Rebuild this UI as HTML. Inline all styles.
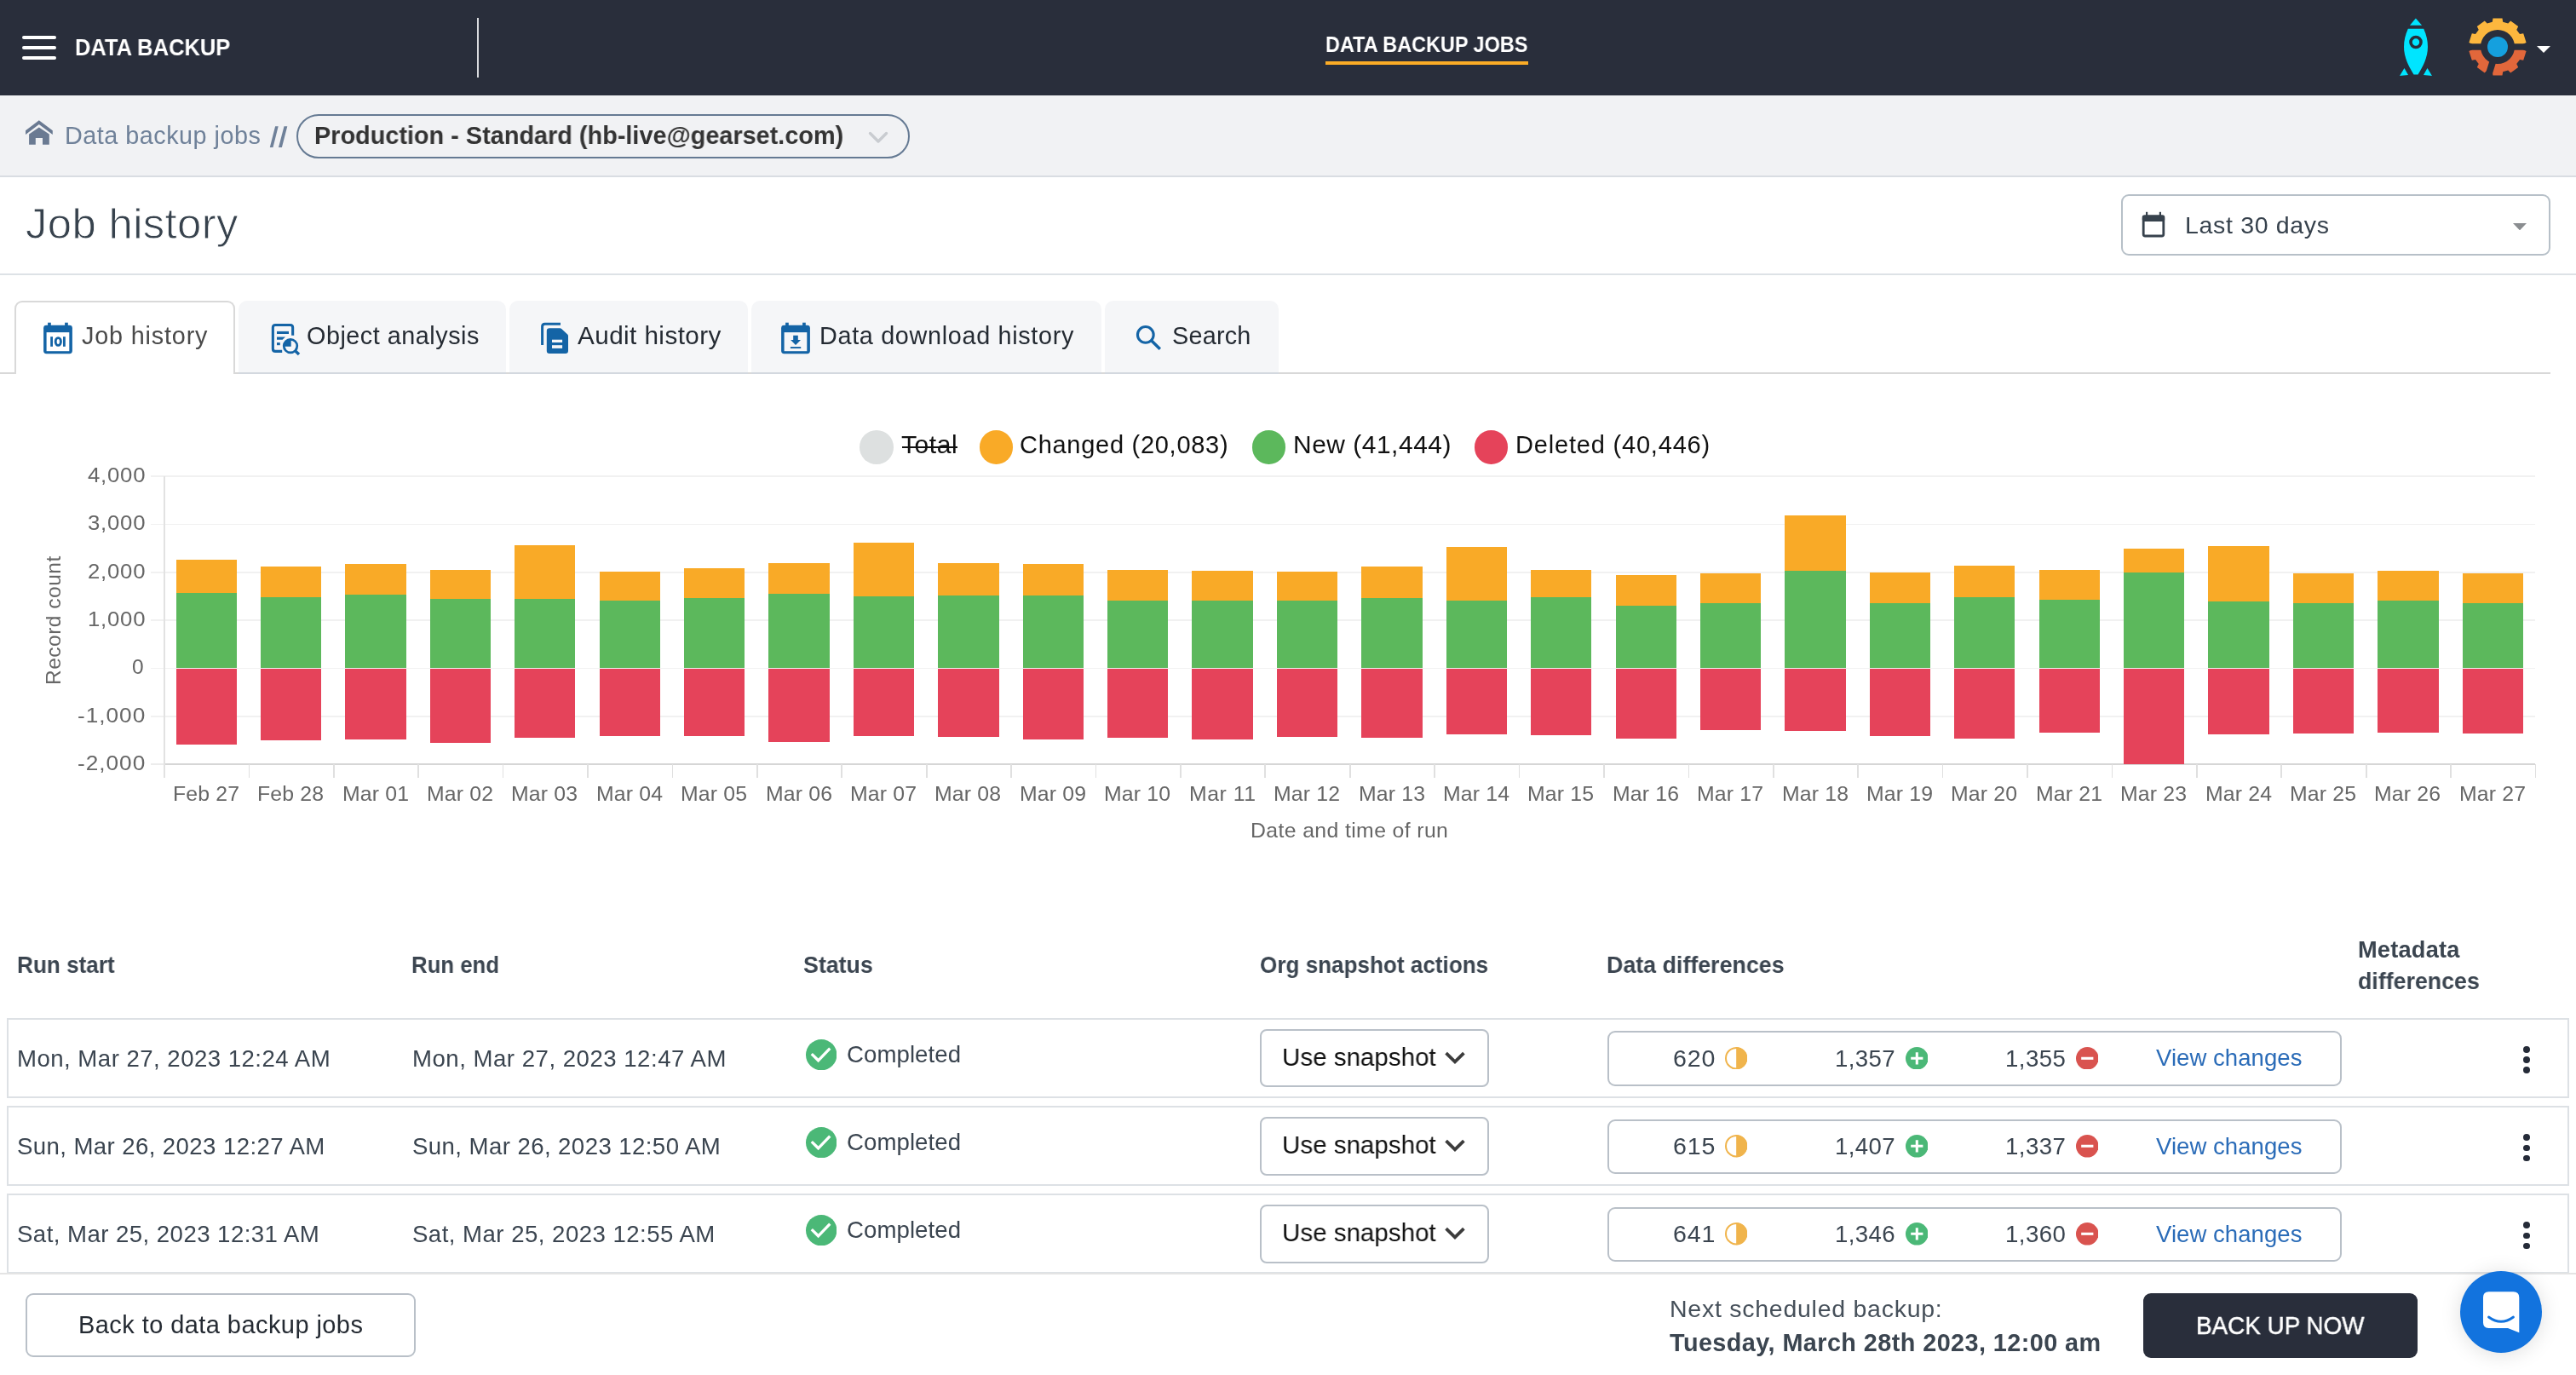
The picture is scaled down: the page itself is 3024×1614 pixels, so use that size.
<!DOCTYPE html>
<html lang="en"><head><meta charset="utf-8"><title>Job history - Data backup</title>
<style>
html,body{margin:0;padding:0;background:#fff;}
body{width:3024px;height:1614px;position:relative;overflow:hidden;font-family:"Liberation Sans",sans-serif;}
@media (max-width:1600px){html{zoom:.5;}}
.b{position:absolute;display:block;}
.t{position:absolute;white-space:pre;transform-origin:0 50%;will-change:transform;font-family:"Liberation Sans",sans-serif;}
</style></head><body>
<div class="b" style="left:0.0px;top:0.0px;width:3024.0px;height:112.0px;background:#292e3b;"></div>
<div class="b" style="left:26.2px;top:42.2px;width:39.8px;height:4.2px;background:#fff;border-radius:2.1px;"></div>
<div class="b" style="left:26.2px;top:54.0px;width:39.8px;height:4.2px;background:#fff;border-radius:2.1px;"></div>
<div class="b" style="left:26.2px;top:65.7px;width:39.8px;height:4.2px;background:#fff;border-radius:2.1px;"></div>
<span class="t" style="left:87.5px;top:41.8px;font-size:27.4px;line-height:27.4px;color:#fff;font-weight:700;transform:scaleX(0.9310);">DATA BACKUP</span>
<div class="b" style="left:560.0px;top:21.0px;width:2.0px;height:69.5px;background:#d9dbde;"></div>
<span class="t" style="left:1556.2px;top:40.0px;font-size:25.8px;line-height:25.8px;color:#fff;font-weight:700;transform:scaleX(0.9083);">DATA BACKUP JOBS</span>
<div class="b" style="left:1555.9px;top:72.0px;width:238.1px;height:3.9px;background:#fbac26;"></div>
<svg class="b" style="left:2812.0px;top:16.0px;" width="48.0" height="78.0" viewBox="0 0 48 78">
<path d="M23.9 5.4 L31.1 13.8 L16.9 13.8 Z" fill="#00e5ff"/>
<path d="M14.8 17.7 L33.2 17.7 C36.5 25 38 32 38 39 C38 51 32.5 62 26.5 71.5 L21.5 71.5 C15.5 62 10 51 10 39 C10 32 11.5 25 14.8 17.7 Z" fill="#00e5ff"/>
<circle cx="24" cy="33.5" r="6" fill="none" stroke="#292e3b" stroke-width="3.6"/>
<path d="M10.5 64 L15 72 L5 73 Z" fill="#00e5ff"/>
<path d="M37.5 64 L43 73 L33 72 Z" fill="#00e5ff"/>
</svg>
<svg class="b" style="left:2898.0px;top:21.0px;" width="68.0" height="68.0" viewBox="0 0 68 68">
<defs><clipPath id="gt"><rect x="0" y="0" width="68" height="30.3"/></clipPath>
<clipPath id="gb"><rect x="0" y="37.7" width="68" height="31"/></clipPath></defs>
<path d="M27.82 4.64 L28.47 0.45 L39.53 0.45 L40.18 4.64 L46.26 6.62 L49.25 3.61 L58.19 10.11 L56.25 13.88 L60.01 19.05 L64.20 18.37 L67.61 28.89 L63.83 30.80 L63.83 37.20 L67.61 39.11 L64.20 49.63 L60.01 48.95 L56.25 54.12 L58.19 57.89 L49.25 64.39 L46.26 61.38 L40.18 63.36 L39.53 67.55 L28.47 67.55 L27.82 63.36 L21.74 61.38 L18.75 64.39 L9.81 57.89 L11.75 54.12 L7.99 48.95 L3.80 49.63 L0.39 39.11 L4.17 37.20 L4.17 30.80 L0.39 28.89 L3.80 18.37 L7.99 19.05 L11.75 13.88 L9.81 10.11 L18.75 3.61 L21.74 6.62 Z M54.00 34.00 A20 20 0 1 0 14.00 34.00 A20 20 0 1 0 54.00 34.00 Z" fill="#fdb73e" fill-rule="evenodd" clip-path="url(#gt)"/>
<path d="M27.82 4.64 L28.47 0.45 L39.53 0.45 L40.18 4.64 L46.26 6.62 L49.25 3.61 L58.19 10.11 L56.25 13.88 L60.01 19.05 L64.20 18.37 L67.61 28.89 L63.83 30.80 L63.83 37.20 L67.61 39.11 L64.20 49.63 L60.01 48.95 L56.25 54.12 L58.19 57.89 L49.25 64.39 L46.26 61.38 L40.18 63.36 L39.53 67.55 L28.47 67.55 L27.82 63.36 L21.74 61.38 L18.75 64.39 L9.81 57.89 L11.75 54.12 L7.99 48.95 L3.80 49.63 L0.39 39.11 L4.17 37.20 L4.17 30.80 L0.39 28.89 L3.80 18.37 L7.99 19.05 L11.75 13.88 L9.81 10.11 L18.75 3.61 L21.74 6.62 Z M54.00 34.00 A20 20 0 1 0 14.00 34.00 A20 20 0 1 0 54.00 34.00 Z" fill="#e2673b" fill-rule="evenodd" clip-path="url(#gb)"/>
<path d="M33.7 34 L22.2 71" stroke="#292e3b" stroke-width="7.8" fill="none"/>
<circle cx="34" cy="34" r="12" fill="#15a0de"/>
</svg>
<svg class="b" style="left:2978.0px;top:54.0px;" width="16.0" height="8.0" viewBox="0 0 16 8"><path d="M0 0 L16 0 L8 8 Z" fill="#fff"/></svg>
<div class="b" style="left:0.0px;top:112.0px;width:3024.0px;height:96.0px;background:#f1f2f4;border-bottom:2px solid #d9dde2;box-sizing:border-box;"></div>
<svg class="b" style="left:29.0px;top:140.0px;" width="34.0" height="31.0" viewBox="0 0 34 31">
<path d="M16.8 1.2 L32.8 13.2 L32.8 18 L16.8 6 L1 18 L1 13.2 Z" fill="#6a7a92"/>
<path d="M16.8 9.4 L28.8 17.6 L28.8 29.8 L21 29.8 L21 22 L12.8 22 L12.8 29.8 L5.1 29.8 L5.1 17.6 Z" fill="#6a7a92"/>
</svg>
<span class="t" style="left:76.0px;top:145.2px;font-size:28.8px;line-height:28.8px;color:#6f8199;letter-spacing:0.49px;">Data backup jobs</span>
<svg class="b" style="left:316.0px;top:148.0px;" width="22.0" height="26.0" viewBox="0 0 22 26"><path d="M0.8 25.1 L4.5 25.1 L10.7 0.3 L7.1 0.3 Z M11 25.1 L14.9 25.1 L21.3 0.3 L17.5 0.3 Z" fill="#6f8199"/></svg>
<div class="b" style="left:348.1px;top:134.0px;width:719.9px;height:51.8px;border:2px solid #657a93;border-radius:26px;box-sizing:border-box;background:#f1f2f4;"></div>
<span class="t" style="left:369.0px;top:145.1px;font-size:29px;line-height:29px;color:#333;font-weight:700;transform:scaleX(0.9948);">Production - Standard (hb-live@gearset.com)</span>
<svg class="b" style="left:1019.0px;top:154.0px;" width="24.0" height="15.0" viewBox="0 0 24 15"><path d="M2.5 2.5 L12 12 L21.5 2.5" stroke="#c9ccd0" stroke-width="3.4" fill="none" stroke-linecap="round" stroke-linejoin="round"/></svg>
<div class="b" style="left:0.0px;top:208.0px;width:3024.0px;height:115.0px;background:#fff;border-bottom:2px solid #dde2e6;box-sizing:border-box;"></div>
<span class="t" style="left:30.2px;top:238.0px;font-size:50.8px;line-height:50.8px;color:#37424d;letter-spacing:0.38px;-webkit-text-stroke:0.9px #fff;">Job history</span>
<div class="b" style="left:2490.1px;top:228.3px;width:503.7px;height:71.3px;border:2px solid #b7c0c8;border-radius:9px;box-sizing:border-box;background:#fff;"></div>
<svg class="b" style="left:2514.0px;top:248.0px;" width="28.0" height="31.0" viewBox="0 0 28 31">
<rect x="2.2" y="6" width="23.6" height="23" rx="2" fill="none" stroke="#37424d" stroke-width="2.8"/>
<rect x="0.8" y="4.6" width="26.4" height="7.4" rx="2" fill="#37424d"/>
<rect x="5" y="0.8" width="2.2" height="5" fill="#37424d"/><rect x="20.8" y="0.8" width="2.2" height="5" fill="#37424d"/>
</svg>
<span class="t" style="left:2564.5px;top:249.6px;font-size:28.5px;line-height:28.5px;color:#37424d;letter-spacing:0.67px;">Last 30 days</span>
<svg class="b" style="left:2950.0px;top:262.0px;" width="16.0" height="8.4" viewBox="0 0 16 8.4"><path d="M0 0 L16 0 L8 8.4 Z" fill="#8a8d90"/></svg>
<div class="b" style="left:0.0px;top:436.8px;width:2994.0px;height:2.0px;background:#d8d8d8;"></div>
<div class="b" style="left:279.7px;top:353.0px;width:314.0px;height:83.8px;background:#f5f6f8;border-radius:10px 10px 0 0;"></div>
<div class="b" style="left:279.7px;top:436.8px;width:314.0px;height:2.0px;background:#d3d8df;"></div>
<div class="b" style="left:597.8px;top:353.0px;width:280.2px;height:83.8px;background:#f5f6f8;border-radius:10px 10px 0 0;"></div>
<div class="b" style="left:597.8px;top:436.8px;width:280.2px;height:2.0px;background:#d3d8df;"></div>
<div class="b" style="left:881.9px;top:353.0px;width:411.0px;height:83.8px;background:#f5f6f8;border-radius:10px 10px 0 0;"></div>
<div class="b" style="left:881.9px;top:436.8px;width:411.0px;height:2.0px;background:#d3d8df;"></div>
<div class="b" style="left:1297.0px;top:353.0px;width:204.2px;height:83.8px;background:#f5f6f8;border-radius:10px 10px 0 0;"></div>
<div class="b" style="left:1297.0px;top:436.8px;width:204.2px;height:2.0px;background:#d3d8df;"></div>
<div class="b" style="left:16.8px;top:353.0px;width:258.8px;height:85.8px;background:#fff;border:2px solid #d9d9d9;border-bottom:none;border-radius:9px 9px 0 0;box-sizing:border-box;"></div>
<svg class="b" style="left:51.0px;top:378.0px;" width="34.0" height="38.0" viewBox="0 0 34 38">
<rect x="0.1" y="3.8" width="33.8" height="33.4" rx="3.4" fill="#1464a6"/>
<rect x="5.1" y="0.7" width="3.7" height="5" fill="#1464a6"/><rect x="25.1" y="0.7" width="3.7" height="5" fill="#1464a6"/>
<rect x="3.6" y="12.1" width="26.7" height="22.1" fill="#fff"/>
<rect x="8.2" y="17.2" width="2.8" height="11.6" fill="#1464a6"/><rect x="23" y="17.2" width="2.8" height="11.6" fill="#1464a6"/>
<ellipse cx="17.3" cy="23" rx="3.1" ry="4.4" fill="none" stroke="#1464a6" stroke-width="2.9"/></svg>
<span class="t" style="left:96.0px;top:380.2px;font-size:28.8px;line-height:28.8px;color:#4a4a4a;letter-spacing:0.82px;">Job history</span>
<svg class="b" style="left:318.0px;top:379.0px;" width="36.0" height="39.0" viewBox="0 0 36 39">
<path d="M25.65 14.8 L25.65 5.5 Q25.65 2.55 22.7 2.55 L5.3 2.55 Q2.35 2.55 2.35 5.5 L2.35 30.4 Q2.35 33.35 5.3 33.35 L13.2 33.35" fill="none" stroke="#1464a6" stroke-width="3.1"/>
<rect x="7" y="9.9" width="14" height="3.1" fill="#1464a6"/>
<path d="M7 16.5 L17 16.5 L13.6 19.8 L7 19.8 Z" fill="#1464a6"/>
<rect x="7" y="23.1" width="3.8" height="3.1" fill="#1464a6"/>
<circle cx="23" cy="27.1" r="10.7" fill="#f5f6f8"/>
<circle cx="23" cy="27.1" r="7.8" fill="none" stroke="#1464a6" stroke-width="2.7"/>
<path d="M23.7 27.8 L15.2 27.8 A7.8 7.8 0 0 1 23.7 19.3 Z" fill="#1464a6"/>
<path d="M28.2 32.4 L33 37" stroke="#1464a6" stroke-width="3.4"/>
</svg>
<span class="t" style="left:359.6px;top:380.2px;font-size:28.8px;line-height:28.8px;color:#252b33;letter-spacing:0.51px;">Object analysis</span>
<svg class="b" style="left:634.0px;top:378.0px;" width="34.0" height="38.0" viewBox="0 0 34 38">
<path d="M24 2.3 L5.6 2.3 Q2.6 2.3 2.6 5.3 L2.6 27.1" fill="none" stroke="#1464a6" stroke-width="3"/>
<path d="M11 7.2 L23.4 7.2 Q24.4 7.2 25.2 8 L32.2 14.6 Q33 15.4 33 16.4 L33 33.8 Q33 37 29.8 37 L11 37 Q7.8 37 7.8 33.8 L7.8 10.4 Q7.8 7.2 11 7.2 Z" fill="#1464a6"/>
<rect x="14" y="20.7" width="12.1" height="3.3" fill="#f5f6f8"/><rect x="14" y="27.2" width="12.1" height="3.7" fill="#f5f6f8"/>
</svg>
<span class="t" style="left:677.6px;top:380.2px;font-size:28.8px;line-height:28.8px;color:#252b33;letter-spacing:0.40px;transform:scaleX(1.0315);">Audit history</span>
<svg class="b" style="left:917.0px;top:378.0px;" width="34.0" height="38.0" viewBox="0 0 34 38">
<rect x="0.1" y="3.8" width="33.8" height="33.4" rx="3.4" fill="#1464a6"/>
<rect x="5.1" y="0.7" width="3.7" height="5" fill="#1464a6"/><rect x="25.1" y="0.7" width="3.7" height="5" fill="#1464a6"/>
<rect x="3.6" y="12.1" width="26.7" height="22.1" fill="#f5f6f8"/>
<path d="M14.2 15.8 L19.8 15.8 L19.8 21 L23 21 L17 27 L11.1 21 L14.2 21 Z" fill="#1464a6"/>
<rect x="10.9" y="29.1" width="12.3" height="1.9" fill="#1464a6"/></svg>
<span class="t" style="left:962.0px;top:380.2px;font-size:28.8px;line-height:28.8px;color:#252b33;letter-spacing:0.67px;">Data download history</span>
<svg class="b" style="left:1333.0px;top:381.0px;" width="32.0" height="32.0" viewBox="0 0 32 32">
<circle cx="11.8" cy="11.9" r="9.35" fill="none" stroke="#1464a6" stroke-width="3.1"/>
<path d="M18.6 18.7 L28.8 28.7" stroke="#1464a6" stroke-width="3.5"/>
</svg>
<span class="t" style="left:1376.3px;top:380.2px;font-size:28.8px;line-height:28.8px;color:#252b33;letter-spacing:0.22px;">Search</span>
<div class="b" style="left:1009.4px;top:505.0px;width:39.6px;height:39.6px;background:#dde0e0;border-radius:50%;"></div>
<div class="b" style="left:1149.5px;top:505.0px;width:39.6px;height:39.6px;background:#f9aa27;border-radius:50%;"></div>
<div class="b" style="left:1469.7px;top:505.0px;width:39.6px;height:39.6px;background:#5cb85c;border-radius:50%;"></div>
<div class="b" style="left:1730.6px;top:505.0px;width:39.6px;height:39.6px;background:#e5435a;border-radius:50%;"></div>
<span class="t" style="left:1058.2px;top:507.8px;font-size:29px;line-height:29px;color:#111;letter-spacing:0.52px;transform:scaleX(1.0350);">Total</span>
<div class="b" style="left:1058.5px;top:523.5px;width:65.5px;height:2.8px;background:#111;"></div>
<span class="t" style="left:1197.4px;top:507.8px;font-size:29px;line-height:29px;color:#111;letter-spacing:0.72px;">Changed (20,083)</span>
<span class="t" style="left:1517.5px;top:507.8px;font-size:29px;line-height:29px;color:#111;letter-spacing:0.50px;transform:scaleX(1.0326);">New (41,444)</span>
<span class="t" style="left:1778.8px;top:507.8px;font-size:29px;line-height:29px;color:#111;letter-spacing:0.81px;">Deleted (40,446)</span>
<div class="b" style="left:176.5px;top:558.1px;width:2799.5px;height:1.8px;background:#f1f1f1;"></div>
<div class="b" style="left:176.5px;top:614.5px;width:2799.5px;height:1.8px;background:#f1f1f1;"></div>
<div class="b" style="left:176.5px;top:670.9px;width:2799.5px;height:1.8px;background:#f1f1f1;"></div>
<div class="b" style="left:176.5px;top:727.2px;width:2799.5px;height:1.8px;background:#f1f1f1;"></div>
<div class="b" style="left:176.5px;top:783.6px;width:2799.5px;height:1.8px;background:#f1f1f1;"></div>
<div class="b" style="left:176.5px;top:840.0px;width:2799.5px;height:1.8px;background:#f1f1f1;"></div>
<div class="b" style="left:176.5px;top:896.4px;width:16.5px;height:1.8px;background:#ececec;"></div>
<div class="b" style="left:193.0px;top:896.4px;width:2783.0px;height:1.8px;background:#d6d6d6;"></div>
<div class="b" style="left:192.1px;top:559.0px;width:1.8px;height:354.0px;background:#e2e2e2;"></div>
<div class="b" style="left:291.5px;top:897.0px;width:1.8px;height:16.0px;background:#e0e0e0;"></div>
<div class="b" style="left:390.9px;top:897.0px;width:1.8px;height:16.0px;background:#e0e0e0;"></div>
<div class="b" style="left:490.3px;top:897.0px;width:1.8px;height:16.0px;background:#e0e0e0;"></div>
<div class="b" style="left:589.7px;top:897.0px;width:1.8px;height:16.0px;background:#e0e0e0;"></div>
<div class="b" style="left:689.1px;top:897.0px;width:1.8px;height:16.0px;background:#e0e0e0;"></div>
<div class="b" style="left:788.6px;top:897.0px;width:1.8px;height:16.0px;background:#e0e0e0;"></div>
<div class="b" style="left:888.0px;top:897.0px;width:1.8px;height:16.0px;background:#e0e0e0;"></div>
<div class="b" style="left:987.4px;top:897.0px;width:1.8px;height:16.0px;background:#e0e0e0;"></div>
<div class="b" style="left:1086.8px;top:897.0px;width:1.8px;height:16.0px;background:#e0e0e0;"></div>
<div class="b" style="left:1186.2px;top:897.0px;width:1.8px;height:16.0px;background:#e0e0e0;"></div>
<div class="b" style="left:1285.6px;top:897.0px;width:1.8px;height:16.0px;background:#e0e0e0;"></div>
<div class="b" style="left:1385.0px;top:897.0px;width:1.8px;height:16.0px;background:#e0e0e0;"></div>
<div class="b" style="left:1484.4px;top:897.0px;width:1.8px;height:16.0px;background:#e0e0e0;"></div>
<div class="b" style="left:1583.8px;top:897.0px;width:1.8px;height:16.0px;background:#e0e0e0;"></div>
<div class="b" style="left:1683.2px;top:897.0px;width:1.8px;height:16.0px;background:#e0e0e0;"></div>
<div class="b" style="left:1782.7px;top:897.0px;width:1.8px;height:16.0px;background:#e0e0e0;"></div>
<div class="b" style="left:1882.1px;top:897.0px;width:1.8px;height:16.0px;background:#e0e0e0;"></div>
<div class="b" style="left:1981.5px;top:897.0px;width:1.8px;height:16.0px;background:#e0e0e0;"></div>
<div class="b" style="left:2080.9px;top:897.0px;width:1.8px;height:16.0px;background:#e0e0e0;"></div>
<div class="b" style="left:2180.3px;top:897.0px;width:1.8px;height:16.0px;background:#e0e0e0;"></div>
<div class="b" style="left:2279.7px;top:897.0px;width:1.8px;height:16.0px;background:#e0e0e0;"></div>
<div class="b" style="left:2379.1px;top:897.0px;width:1.8px;height:16.0px;background:#e0e0e0;"></div>
<div class="b" style="left:2478.5px;top:897.0px;width:1.8px;height:16.0px;background:#e0e0e0;"></div>
<div class="b" style="left:2577.9px;top:897.0px;width:1.8px;height:16.0px;background:#e0e0e0;"></div>
<div class="b" style="left:2677.3px;top:897.0px;width:1.8px;height:16.0px;background:#e0e0e0;"></div>
<div class="b" style="left:2776.8px;top:897.0px;width:1.8px;height:16.0px;background:#e0e0e0;"></div>
<div class="b" style="left:2876.2px;top:897.0px;width:1.8px;height:16.0px;background:#e0e0e0;"></div>
<div class="b" style="left:2975.6px;top:897.0px;width:1.8px;height:16.0px;background:#e0e0e0;"></div>
<span class="t" style="left:102.9px;top:545.8px;font-size:24.5px;line-height:24.5px;color:#666;letter-spacing:0.74px;transform:scaleX(1.0507);">4,000</span>
<span class="t" style="left:102.9px;top:602.1px;font-size:24.5px;line-height:24.5px;color:#666;letter-spacing:0.74px;transform:scaleX(1.0507);">3,000</span>
<span class="t" style="left:102.9px;top:658.5px;font-size:24.5px;line-height:24.5px;color:#666;letter-spacing:0.74px;transform:scaleX(1.0507);">2,000</span>
<span class="t" style="left:102.9px;top:714.9px;font-size:24.5px;line-height:24.5px;color:#666;letter-spacing:0.74px;transform:scaleX(1.0507);">1,000</span>
<span class="t" style="left:155.2px;top:771.3px;font-size:24.5px;line-height:24.5px;color:#666;">0</span>
<span class="t" style="left:91.2px;top:827.7px;font-size:24.5px;line-height:24.5px;color:#666;letter-spacing:0.91px;transform:scaleX(1.0702);">-1,000</span>
<span class="t" style="left:91.2px;top:884.0px;font-size:24.5px;line-height:24.5px;color:#666;letter-spacing:0.91px;transform:scaleX(1.0702);">-2,000</span>
<div class="b" style="left:61.5px;top:728px;width:0;height:0;transform:rotate(-90deg);"><span class="t" style="left:-75.9px;top:-11.5px;font-size:24.5px;line-height:24.5px;color:#666;letter-spacing:0.50px;">Record count</span></div>
<div class="b" style="left:206.5px;top:657.0px;width:71.4px;height:39.0px;background:#f9aa27;"></div>
<div class="b" style="left:206.5px;top:696.0px;width:71.4px;height:87.7px;background:#5cb85c;"></div>
<div class="b" style="left:206.5px;top:785.3px;width:71.4px;height:88.7px;background:#e5435a;"></div>
<span class="t" style="left:202.7px;top:920.0px;font-size:24.8px;line-height:24.8px;color:#666;letter-spacing:0.17px;">Feb 27</span>
<div class="b" style="left:305.9px;top:665.0px;width:71.4px;height:36.0px;background:#f9aa27;"></div>
<div class="b" style="left:305.9px;top:701.0px;width:71.4px;height:82.7px;background:#5cb85c;"></div>
<div class="b" style="left:305.9px;top:785.3px;width:71.4px;height:83.7px;background:#e5435a;"></div>
<span class="t" style="left:302.1px;top:920.0px;font-size:24.8px;line-height:24.8px;color:#666;letter-spacing:0.17px;">Feb 28</span>
<div class="b" style="left:405.3px;top:662.0px;width:71.4px;height:36.0px;background:#f9aa27;"></div>
<div class="b" style="left:405.3px;top:698.0px;width:71.4px;height:85.7px;background:#5cb85c;"></div>
<div class="b" style="left:405.3px;top:785.3px;width:71.4px;height:82.7px;background:#e5435a;"></div>
<span class="t" style="left:401.6px;top:920.0px;font-size:24.8px;line-height:24.8px;color:#666;letter-spacing:0.17px;">Mar 01</span>
<div class="b" style="left:504.7px;top:669.0px;width:71.4px;height:34.0px;background:#f9aa27;"></div>
<div class="b" style="left:504.7px;top:703.0px;width:71.4px;height:80.7px;background:#5cb85c;"></div>
<div class="b" style="left:504.7px;top:785.3px;width:71.4px;height:86.7px;background:#e5435a;"></div>
<span class="t" style="left:501.0px;top:920.0px;font-size:24.8px;line-height:24.8px;color:#666;letter-spacing:0.17px;">Mar 02</span>
<div class="b" style="left:604.1px;top:640.0px;width:71.4px;height:63.0px;background:#f9aa27;"></div>
<div class="b" style="left:604.1px;top:703.0px;width:71.4px;height:80.7px;background:#5cb85c;"></div>
<div class="b" style="left:604.1px;top:785.3px;width:71.4px;height:80.7px;background:#e5435a;"></div>
<span class="t" style="left:600.4px;top:920.0px;font-size:24.8px;line-height:24.8px;color:#666;letter-spacing:0.17px;">Mar 03</span>
<div class="b" style="left:703.5px;top:671.0px;width:71.4px;height:34.0px;background:#f9aa27;"></div>
<div class="b" style="left:703.5px;top:705.0px;width:71.4px;height:78.7px;background:#5cb85c;"></div>
<div class="b" style="left:703.5px;top:785.3px;width:71.4px;height:78.7px;background:#e5435a;"></div>
<span class="t" style="left:699.8px;top:920.0px;font-size:24.8px;line-height:24.8px;color:#666;letter-spacing:0.17px;">Mar 04</span>
<div class="b" style="left:803.0px;top:667.0px;width:71.4px;height:35.0px;background:#f9aa27;"></div>
<div class="b" style="left:803.0px;top:702.0px;width:71.4px;height:81.7px;background:#5cb85c;"></div>
<div class="b" style="left:803.0px;top:785.3px;width:71.4px;height:78.7px;background:#e5435a;"></div>
<span class="t" style="left:799.2px;top:920.0px;font-size:24.8px;line-height:24.8px;color:#666;letter-spacing:0.17px;">Mar 05</span>
<div class="b" style="left:902.4px;top:661.0px;width:71.4px;height:36.0px;background:#f9aa27;"></div>
<div class="b" style="left:902.4px;top:697.0px;width:71.4px;height:86.7px;background:#5cb85c;"></div>
<div class="b" style="left:902.4px;top:785.3px;width:71.4px;height:85.7px;background:#e5435a;"></div>
<span class="t" style="left:898.6px;top:920.0px;font-size:24.8px;line-height:24.8px;color:#666;letter-spacing:0.17px;">Mar 06</span>
<div class="b" style="left:1001.8px;top:637.0px;width:71.4px;height:63.0px;background:#f9aa27;"></div>
<div class="b" style="left:1001.8px;top:700.0px;width:71.4px;height:83.7px;background:#5cb85c;"></div>
<div class="b" style="left:1001.8px;top:785.3px;width:71.4px;height:78.7px;background:#e5435a;"></div>
<span class="t" style="left:998.0px;top:920.0px;font-size:24.8px;line-height:24.8px;color:#666;letter-spacing:0.17px;">Mar 07</span>
<div class="b" style="left:1101.2px;top:661.0px;width:71.4px;height:38.0px;background:#f9aa27;"></div>
<div class="b" style="left:1101.2px;top:699.0px;width:71.4px;height:84.7px;background:#5cb85c;"></div>
<div class="b" style="left:1101.2px;top:785.3px;width:71.4px;height:79.7px;background:#e5435a;"></div>
<span class="t" style="left:1097.4px;top:920.0px;font-size:24.8px;line-height:24.8px;color:#666;letter-spacing:0.17px;">Mar 08</span>
<div class="b" style="left:1200.6px;top:662.0px;width:71.4px;height:37.0px;background:#f9aa27;"></div>
<div class="b" style="left:1200.6px;top:699.0px;width:71.4px;height:84.7px;background:#5cb85c;"></div>
<div class="b" style="left:1200.6px;top:785.3px;width:71.4px;height:82.7px;background:#e5435a;"></div>
<span class="t" style="left:1196.8px;top:920.0px;font-size:24.8px;line-height:24.8px;color:#666;letter-spacing:0.17px;">Mar 09</span>
<div class="b" style="left:1300.0px;top:669.0px;width:71.4px;height:36.0px;background:#f9aa27;"></div>
<div class="b" style="left:1300.0px;top:705.0px;width:71.4px;height:78.7px;background:#5cb85c;"></div>
<div class="b" style="left:1300.0px;top:785.3px;width:71.4px;height:80.7px;background:#e5435a;"></div>
<span class="t" style="left:1296.2px;top:920.0px;font-size:24.8px;line-height:24.8px;color:#666;letter-spacing:0.17px;">Mar 10</span>
<div class="b" style="left:1399.4px;top:670.0px;width:71.4px;height:35.0px;background:#f9aa27;"></div>
<div class="b" style="left:1399.4px;top:705.0px;width:71.4px;height:78.7px;background:#5cb85c;"></div>
<div class="b" style="left:1399.4px;top:785.3px;width:71.4px;height:82.7px;background:#e5435a;"></div>
<span class="t" style="left:1395.7px;top:920.0px;font-size:24.8px;line-height:24.8px;color:#666;letter-spacing:0.54px;">Mar 11</span>
<div class="b" style="left:1498.8px;top:671.0px;width:71.4px;height:34.0px;background:#f9aa27;"></div>
<div class="b" style="left:1498.8px;top:705.0px;width:71.4px;height:78.7px;background:#5cb85c;"></div>
<div class="b" style="left:1498.8px;top:785.3px;width:71.4px;height:79.7px;background:#e5435a;"></div>
<span class="t" style="left:1495.1px;top:920.0px;font-size:24.8px;line-height:24.8px;color:#666;letter-spacing:0.17px;">Mar 12</span>
<div class="b" style="left:1598.2px;top:665.0px;width:71.4px;height:37.0px;background:#f9aa27;"></div>
<div class="b" style="left:1598.2px;top:702.0px;width:71.4px;height:81.7px;background:#5cb85c;"></div>
<div class="b" style="left:1598.2px;top:785.3px;width:71.4px;height:80.7px;background:#e5435a;"></div>
<span class="t" style="left:1594.5px;top:920.0px;font-size:24.8px;line-height:24.8px;color:#666;letter-spacing:0.17px;">Mar 13</span>
<div class="b" style="left:1697.6px;top:642.0px;width:71.4px;height:63.0px;background:#f9aa27;"></div>
<div class="b" style="left:1697.6px;top:705.0px;width:71.4px;height:78.7px;background:#5cb85c;"></div>
<div class="b" style="left:1697.6px;top:785.3px;width:71.4px;height:76.7px;background:#e5435a;"></div>
<span class="t" style="left:1693.9px;top:920.0px;font-size:24.8px;line-height:24.8px;color:#666;letter-spacing:0.17px;">Mar 14</span>
<div class="b" style="left:1797.1px;top:669.0px;width:71.4px;height:32.0px;background:#f9aa27;"></div>
<div class="b" style="left:1797.1px;top:701.0px;width:71.4px;height:82.7px;background:#5cb85c;"></div>
<div class="b" style="left:1797.1px;top:785.3px;width:71.4px;height:77.7px;background:#e5435a;"></div>
<span class="t" style="left:1793.3px;top:920.0px;font-size:24.8px;line-height:24.8px;color:#666;letter-spacing:0.17px;">Mar 15</span>
<div class="b" style="left:1896.5px;top:675.0px;width:71.4px;height:36.0px;background:#f9aa27;"></div>
<div class="b" style="left:1896.5px;top:711.0px;width:71.4px;height:72.7px;background:#5cb85c;"></div>
<div class="b" style="left:1896.5px;top:785.3px;width:71.4px;height:81.7px;background:#e5435a;"></div>
<span class="t" style="left:1892.7px;top:920.0px;font-size:24.8px;line-height:24.8px;color:#666;letter-spacing:0.17px;">Mar 16</span>
<div class="b" style="left:1995.9px;top:673.0px;width:71.4px;height:35.0px;background:#f9aa27;"></div>
<div class="b" style="left:1995.9px;top:708.0px;width:71.4px;height:75.7px;background:#5cb85c;"></div>
<div class="b" style="left:1995.9px;top:785.3px;width:71.4px;height:71.7px;background:#e5435a;"></div>
<span class="t" style="left:1992.1px;top:920.0px;font-size:24.8px;line-height:24.8px;color:#666;letter-spacing:0.17px;">Mar 17</span>
<div class="b" style="left:2095.3px;top:605.0px;width:71.4px;height:65.0px;background:#f9aa27;"></div>
<div class="b" style="left:2095.3px;top:670.0px;width:71.4px;height:113.7px;background:#5cb85c;"></div>
<div class="b" style="left:2095.3px;top:785.3px;width:71.4px;height:72.7px;background:#e5435a;"></div>
<span class="t" style="left:2091.5px;top:920.0px;font-size:24.8px;line-height:24.8px;color:#666;letter-spacing:0.17px;">Mar 18</span>
<div class="b" style="left:2194.7px;top:672.0px;width:71.4px;height:36.0px;background:#f9aa27;"></div>
<div class="b" style="left:2194.7px;top:708.0px;width:71.4px;height:75.7px;background:#5cb85c;"></div>
<div class="b" style="left:2194.7px;top:785.3px;width:71.4px;height:78.7px;background:#e5435a;"></div>
<span class="t" style="left:2190.9px;top:920.0px;font-size:24.8px;line-height:24.8px;color:#666;letter-spacing:0.17px;">Mar 19</span>
<div class="b" style="left:2294.1px;top:664.0px;width:71.4px;height:37.0px;background:#f9aa27;"></div>
<div class="b" style="left:2294.1px;top:701.0px;width:71.4px;height:82.7px;background:#5cb85c;"></div>
<div class="b" style="left:2294.1px;top:785.3px;width:71.4px;height:81.7px;background:#e5435a;"></div>
<span class="t" style="left:2290.3px;top:920.0px;font-size:24.8px;line-height:24.8px;color:#666;letter-spacing:0.17px;">Mar 20</span>
<div class="b" style="left:2393.5px;top:669.0px;width:71.4px;height:35.0px;background:#f9aa27;"></div>
<div class="b" style="left:2393.5px;top:704.0px;width:71.4px;height:79.7px;background:#5cb85c;"></div>
<div class="b" style="left:2393.5px;top:785.3px;width:71.4px;height:74.7px;background:#e5435a;"></div>
<span class="t" style="left:2389.8px;top:920.0px;font-size:24.8px;line-height:24.8px;color:#666;letter-spacing:0.17px;">Mar 21</span>
<div class="b" style="left:2492.9px;top:644.0px;width:71.4px;height:28.0px;background:#f9aa27;"></div>
<div class="b" style="left:2492.9px;top:672.0px;width:71.4px;height:111.7px;background:#5cb85c;"></div>
<div class="b" style="left:2492.9px;top:785.3px;width:71.4px;height:111.7px;background:#e5435a;"></div>
<span class="t" style="left:2489.2px;top:920.0px;font-size:24.8px;line-height:24.8px;color:#666;letter-spacing:0.17px;">Mar 23</span>
<div class="b" style="left:2592.3px;top:641.0px;width:71.4px;height:65.0px;background:#f9aa27;"></div>
<div class="b" style="left:2592.3px;top:706.0px;width:71.4px;height:77.7px;background:#5cb85c;"></div>
<div class="b" style="left:2592.3px;top:785.3px;width:71.4px;height:76.7px;background:#e5435a;"></div>
<span class="t" style="left:2588.6px;top:920.0px;font-size:24.8px;line-height:24.8px;color:#666;letter-spacing:0.17px;">Mar 24</span>
<div class="b" style="left:2691.8px;top:673.0px;width:71.4px;height:35.0px;background:#f9aa27;"></div>
<div class="b" style="left:2691.8px;top:708.0px;width:71.4px;height:75.7px;background:#5cb85c;"></div>
<div class="b" style="left:2691.8px;top:785.3px;width:71.4px;height:75.7px;background:#e5435a;"></div>
<span class="t" style="left:2688.0px;top:920.0px;font-size:24.8px;line-height:24.8px;color:#666;letter-spacing:0.17px;">Mar 25</span>
<div class="b" style="left:2791.2px;top:670.0px;width:71.4px;height:35.0px;background:#f9aa27;"></div>
<div class="b" style="left:2791.2px;top:705.0px;width:71.4px;height:78.7px;background:#5cb85c;"></div>
<div class="b" style="left:2791.2px;top:785.3px;width:71.4px;height:74.7px;background:#e5435a;"></div>
<span class="t" style="left:2787.4px;top:920.0px;font-size:24.8px;line-height:24.8px;color:#666;letter-spacing:0.17px;">Mar 26</span>
<div class="b" style="left:2890.6px;top:673.0px;width:71.4px;height:35.0px;background:#f9aa27;"></div>
<div class="b" style="left:2890.6px;top:708.0px;width:71.4px;height:75.7px;background:#5cb85c;"></div>
<div class="b" style="left:2890.6px;top:785.3px;width:71.4px;height:75.7px;background:#e5435a;"></div>
<span class="t" style="left:2886.8px;top:920.0px;font-size:24.8px;line-height:24.8px;color:#666;letter-spacing:0.17px;">Mar 27</span>
<span class="t" style="left:1468.0px;top:962.6px;font-size:24.8px;line-height:24.8px;color:#666;letter-spacing:0.38px;">Date and time of run</span>
<span class="t" style="left:20.0px;top:1119.0px;font-size:27.2px;line-height:27.2px;color:#3b4550;font-weight:700;transform:scaleX(0.9608);">Run start</span>
<span class="t" style="left:483.2px;top:1119.0px;font-size:27.2px;line-height:27.2px;color:#3b4550;font-weight:700;transform:scaleX(0.9468);">Run end</span>
<span class="t" style="left:942.8px;top:1119.0px;font-size:27.2px;line-height:27.2px;color:#3b4550;font-weight:700;transform:scaleX(0.9839);">Status</span>
<span class="t" style="left:1479.0px;top:1119.0px;font-size:27.2px;line-height:27.2px;color:#3b4550;font-weight:700;transform:scaleX(0.9595);">Org snapshot actions</span>
<span class="t" style="left:1886.0px;top:1119.0px;font-size:27.2px;line-height:27.2px;color:#3b4550;font-weight:700;transform:scaleX(0.9859);">Data differences</span>
<span class="t" style="left:2768.4px;top:1100.6px;font-size:27.2px;line-height:27.2px;color:#3b4550;font-weight:700;letter-spacing:0.22px;">Metadata</span>
<span class="t" style="left:2768.4px;top:1137.6px;font-size:27.2px;line-height:27.2px;color:#3b4550;font-weight:700;transform:scaleX(0.9841);">differences</span>
<div class="b" style="left:8.0px;top:1195.0px;width:3008.0px;height:94.0px;border:2px solid #dde1e5;box-sizing:border-box;background:#fff;"></div>
<span class="t" style="left:20.0px;top:1228.7px;font-size:27.6px;line-height:27.6px;color:#3b4550;letter-spacing:0.47px;">Mon, Mar 27, 2023 12:24 AM</span>
<span class="t" style="left:483.6px;top:1228.7px;font-size:27.6px;line-height:27.6px;color:#3b4550;letter-spacing:0.50px;">Mon, Mar 27, 2023 12:47 AM</span>
<svg class="b" style="left:945.8px;top:1219.7px;" width="36.4" height="36.4" viewBox="0 0 36.4 36.4"><circle cx="18.2" cy="18.2" r="18.2" fill="#4bb877"/><path d="M6.8 17.1 L14.6 24.8 L28.3 10.7" stroke="#fff" stroke-width="3.3" fill="none" stroke-linejoin="miter"/></svg>
<span class="t" style="left:993.5px;top:1223.9px;font-size:27.6px;line-height:27.6px;color:#3b4550;letter-spacing:0.07px;">Completed</span>
<div class="b" style="left:1479.0px;top:1207.5px;width:268.7px;height:68.9px;border:2px solid #b9c0c8;border-radius:8px;box-sizing:border-box;background:#fff;"></div>
<span class="t" style="left:1505.0px;top:1225.7px;font-size:30px;line-height:30px;color:#111;transform:scaleX(0.9850);">Use snapshot</span>
<svg class="b" style="left:1694.0px;top:1232.0px;" width="28.0" height="19.0" viewBox="0 0 28 19"><path d="M3.6 4.2 L14 14.4 L24.4 4.2" stroke="#3c3c3c" stroke-width="3.8" fill="none"/></svg>
<div class="b" style="left:1887.4px;top:1210.2px;width:861.2px;height:64.4px;border:2px solid #b9c0c8;border-radius:9px;box-sizing:border-box;background:#fff;"></div>
<span class="t" style="left:1964.0px;top:1228.7px;font-size:27.6px;line-height:27.6px;color:#3b4550;letter-spacing:0.80px;transform:scaleX(1.0362);">620</span>
<svg class="b" style="left:2025.0px;top:1228.8px;" width="26.4" height="26.4" viewBox="0 0 26.4 26.4"><circle cx="13.2" cy="13.2" r="12.2" fill="#fff" stroke="#f0b44c" stroke-width="2"/><path d="M13.2 0.2 A13 13 0 0 1 13.2 26.2 Z" fill="#f0b44c"/></svg>
<span class="t" style="left:2153.6px;top:1228.7px;font-size:27.6px;line-height:27.6px;color:#3b4550;letter-spacing:0.40px;">1,357</span>
<svg class="b" style="left:2236.7px;top:1228.8px;" width="26.6" height="26.6" viewBox="0 0 26.6 26.6"><circle cx="13.3" cy="13.3" r="13.3" fill="#4bb877"/><path d="M13.3 6.2 L13.3 20.4 M6.2 13.3 L20.4 13.3" stroke="#fff" stroke-width="3.1"/></svg>
<span class="t" style="left:2353.5px;top:1228.7px;font-size:27.6px;line-height:27.6px;color:#3b4550;letter-spacing:0.45px;">1,355</span>
<svg class="b" style="left:2436.7px;top:1228.8px;" width="26.6" height="26.6" viewBox="0 0 26.6 26.6"><circle cx="13.3" cy="13.3" r="13.3" fill="#d9534f"/><path d="M6.2 13.3 L20.4 13.3" stroke="#fff" stroke-width="3.1"/></svg>
<span class="t" style="left:2531.2px;top:1228.2px;font-size:27.5px;line-height:27.5px;color:#2b6cb8;letter-spacing:0.06px;">View changes</span>
<div class="b" style="left:2962.1px;top:1228.0px;width:7.8px;height:7.8px;background:#252b38;border-radius:50%;"></div>
<div class="b" style="left:2962.1px;top:1240.1px;width:7.8px;height:7.8px;background:#252b38;border-radius:50%;"></div>
<div class="b" style="left:2962.1px;top:1252.1px;width:7.8px;height:7.8px;background:#252b38;border-radius:50%;"></div>
<div class="b" style="left:8.0px;top:1298.4px;width:3008.0px;height:94.0px;border:2px solid #dde1e5;box-sizing:border-box;background:#fff;"></div>
<span class="t" style="left:20.0px;top:1332.1px;font-size:27.6px;line-height:27.6px;color:#3b4550;letter-spacing:0.40px;">Sun, Mar 26, 2023 12:27 AM</span>
<span class="t" style="left:483.6px;top:1332.1px;font-size:27.6px;line-height:27.6px;color:#3b4550;letter-spacing:0.42px;">Sun, Mar 26, 2023 12:50 AM</span>
<svg class="b" style="left:945.8px;top:1323.1px;" width="36.4" height="36.4" viewBox="0 0 36.4 36.4"><circle cx="18.2" cy="18.2" r="18.2" fill="#4bb877"/><path d="M6.8 17.1 L14.6 24.8 L28.3 10.7" stroke="#fff" stroke-width="3.3" fill="none" stroke-linejoin="miter"/></svg>
<span class="t" style="left:993.5px;top:1327.3px;font-size:27.6px;line-height:27.6px;color:#3b4550;letter-spacing:0.07px;">Completed</span>
<div class="b" style="left:1479.0px;top:1310.9px;width:268.7px;height:68.9px;border:2px solid #b9c0c8;border-radius:8px;box-sizing:border-box;background:#fff;"></div>
<span class="t" style="left:1505.0px;top:1329.1px;font-size:30px;line-height:30px;color:#111;transform:scaleX(0.9850);">Use snapshot</span>
<svg class="b" style="left:1694.0px;top:1335.4px;" width="28.0" height="19.0" viewBox="0 0 28 19"><path d="M3.6 4.2 L14 14.4 L24.4 4.2" stroke="#3c3c3c" stroke-width="3.8" fill="none"/></svg>
<div class="b" style="left:1887.4px;top:1313.6px;width:861.2px;height:64.4px;border:2px solid #b9c0c8;border-radius:9px;box-sizing:border-box;background:#fff;"></div>
<span class="t" style="left:1964.0px;top:1332.1px;font-size:27.6px;line-height:27.6px;color:#3b4550;letter-spacing:0.80px;transform:scaleX(1.0362);">615</span>
<svg class="b" style="left:2025.0px;top:1332.2px;" width="26.4" height="26.4" viewBox="0 0 26.4 26.4"><circle cx="13.2" cy="13.2" r="12.2" fill="#fff" stroke="#f0b44c" stroke-width="2"/><path d="M13.2 0.2 A13 13 0 0 1 13.2 26.2 Z" fill="#f0b44c"/></svg>
<span class="t" style="left:2153.6px;top:1332.1px;font-size:27.6px;line-height:27.6px;color:#3b4550;letter-spacing:0.40px;">1,407</span>
<svg class="b" style="left:2236.7px;top:1332.2px;" width="26.6" height="26.6" viewBox="0 0 26.6 26.6"><circle cx="13.3" cy="13.3" r="13.3" fill="#4bb877"/><path d="M13.3 6.2 L13.3 20.4 M6.2 13.3 L20.4 13.3" stroke="#fff" stroke-width="3.1"/></svg>
<span class="t" style="left:2353.5px;top:1332.1px;font-size:27.6px;line-height:27.6px;color:#3b4550;letter-spacing:0.45px;">1,337</span>
<svg class="b" style="left:2436.7px;top:1332.2px;" width="26.6" height="26.6" viewBox="0 0 26.6 26.6"><circle cx="13.3" cy="13.3" r="13.3" fill="#d9534f"/><path d="M6.2 13.3 L20.4 13.3" stroke="#fff" stroke-width="3.1"/></svg>
<span class="t" style="left:2531.2px;top:1331.6px;font-size:27.5px;line-height:27.5px;color:#2b6cb8;letter-spacing:0.06px;">View changes</span>
<div class="b" style="left:2962.1px;top:1331.4px;width:7.8px;height:7.8px;background:#252b38;border-radius:50%;"></div>
<div class="b" style="left:2962.1px;top:1343.5px;width:7.8px;height:7.8px;background:#252b38;border-radius:50%;"></div>
<div class="b" style="left:2962.1px;top:1355.5px;width:7.8px;height:7.8px;background:#252b38;border-radius:50%;"></div>
<div class="b" style="left:8.0px;top:1401.4px;width:3008.0px;height:94.0px;border:2px solid #dde1e5;box-sizing:border-box;background:#fff;"></div>
<span class="t" style="left:20.0px;top:1435.1px;font-size:27.6px;line-height:27.6px;color:#3b4550;letter-spacing:0.45px;">Sat, Mar 25, 2023 12:31 AM</span>
<span class="t" style="left:483.6px;top:1435.1px;font-size:27.6px;line-height:27.6px;color:#3b4550;letter-spacing:0.47px;">Sat, Mar 25, 2023 12:55 AM</span>
<svg class="b" style="left:945.8px;top:1426.1px;" width="36.4" height="36.4" viewBox="0 0 36.4 36.4"><circle cx="18.2" cy="18.2" r="18.2" fill="#4bb877"/><path d="M6.8 17.1 L14.6 24.8 L28.3 10.7" stroke="#fff" stroke-width="3.3" fill="none" stroke-linejoin="miter"/></svg>
<span class="t" style="left:993.5px;top:1430.3px;font-size:27.6px;line-height:27.6px;color:#3b4550;letter-spacing:0.07px;">Completed</span>
<div class="b" style="left:1479.0px;top:1413.9px;width:268.7px;height:68.9px;border:2px solid #b9c0c8;border-radius:8px;box-sizing:border-box;background:#fff;"></div>
<span class="t" style="left:1505.0px;top:1432.1px;font-size:30px;line-height:30px;color:#111;transform:scaleX(0.9850);">Use snapshot</span>
<svg class="b" style="left:1694.0px;top:1438.4px;" width="28.0" height="19.0" viewBox="0 0 28 19"><path d="M3.6 4.2 L14 14.4 L24.4 4.2" stroke="#3c3c3c" stroke-width="3.8" fill="none"/></svg>
<div class="b" style="left:1887.4px;top:1416.6px;width:861.2px;height:64.4px;border:2px solid #b9c0c8;border-radius:9px;box-sizing:border-box;background:#fff;"></div>
<span class="t" style="left:1964.0px;top:1435.1px;font-size:27.6px;line-height:27.6px;color:#3b4550;letter-spacing:0.80px;transform:scaleX(1.0362);">641</span>
<svg class="b" style="left:2025.0px;top:1435.2px;" width="26.4" height="26.4" viewBox="0 0 26.4 26.4"><circle cx="13.2" cy="13.2" r="12.2" fill="#fff" stroke="#f0b44c" stroke-width="2"/><path d="M13.2 0.2 A13 13 0 0 1 13.2 26.2 Z" fill="#f0b44c"/></svg>
<span class="t" style="left:2153.6px;top:1435.1px;font-size:27.6px;line-height:27.6px;color:#3b4550;letter-spacing:0.40px;">1,346</span>
<svg class="b" style="left:2236.7px;top:1435.2px;" width="26.6" height="26.6" viewBox="0 0 26.6 26.6"><circle cx="13.3" cy="13.3" r="13.3" fill="#4bb877"/><path d="M13.3 6.2 L13.3 20.4 M6.2 13.3 L20.4 13.3" stroke="#fff" stroke-width="3.1"/></svg>
<span class="t" style="left:2353.5px;top:1435.1px;font-size:27.6px;line-height:27.6px;color:#3b4550;letter-spacing:0.45px;">1,360</span>
<svg class="b" style="left:2436.7px;top:1435.2px;" width="26.6" height="26.6" viewBox="0 0 26.6 26.6"><circle cx="13.3" cy="13.3" r="13.3" fill="#d9534f"/><path d="M6.2 13.3 L20.4 13.3" stroke="#fff" stroke-width="3.1"/></svg>
<span class="t" style="left:2531.2px;top:1434.6px;font-size:27.5px;line-height:27.5px;color:#2b6cb8;letter-spacing:0.06px;">View changes</span>
<div class="b" style="left:2962.1px;top:1434.4px;width:7.8px;height:7.8px;background:#252b38;border-radius:50%;"></div>
<div class="b" style="left:2962.1px;top:1446.5px;width:7.8px;height:7.8px;background:#252b38;border-radius:50%;"></div>
<div class="b" style="left:2962.1px;top:1458.5px;width:7.8px;height:7.8px;background:#252b38;border-radius:50%;"></div>
<div class="b" style="left:0.0px;top:1493.8px;width:3024.0px;height:120.2px;background:#fff;border-top:2px solid #e4e4e4;box-sizing:border-box;"></div>
<div class="b" style="left:30.2px;top:1518.2px;width:458.3px;height:75.2px;border:2px solid #b9c0c8;border-radius:9px;box-sizing:border-box;background:#fff;"></div>
<span class="t" style="left:91.9px;top:1541.4px;font-size:29px;line-height:29px;color:#252b33;letter-spacing:0.43px;">Back to data backup jobs</span>
<span class="t" style="left:1959.5px;top:1521.6px;font-size:28.5px;line-height:28.5px;color:#46505a;letter-spacing:0.74px;">Next scheduled backup:</span>
<span class="t" style="left:1959.5px;top:1561.6px;font-size:28.8px;line-height:28.8px;color:#3b4550;font-weight:700;letter-spacing:0.43px;">Tuesday, March 28th 2023, 12:00 am</span>
<div class="b" style="left:2515.9px;top:1517.8px;width:322.0px;height:76.0px;background:#292e3b;border-radius:9px;"></div>
<span class="t" style="left:2578.2px;top:1540.5px;font-size:30px;line-height:30px;color:#fff;transform:scaleX(0.9276);-webkit-text-stroke:0.5px #fff;">BACK UP NOW</span>
<div class="b" style="left:2888.0px;top:1492.0px;width:96.2px;height:96.2px;background:#1273de;border-radius:50%;box-shadow:0 2px 24px rgba(0,0,0,.13);"></div>
<svg class="b" style="left:2912.0px;top:1514.0px;" width="50.0" height="53.0" viewBox="0 0 50 53"><path d="M9.5 2.2 L38.5 2.2 Q45.3 2.2 45.3 9 L45.3 50.2 L32 45 L9.5 45 Q3 45 3 38.5 L3 9 Q3 2.2 9.5 2.2 Z" fill="#fff"/><path d="M9.5 32 Q24 42.5 38.5 32" stroke="#1273de" stroke-width="2.8" fill="none" stroke-linecap="round"/></svg>
</body></html>
